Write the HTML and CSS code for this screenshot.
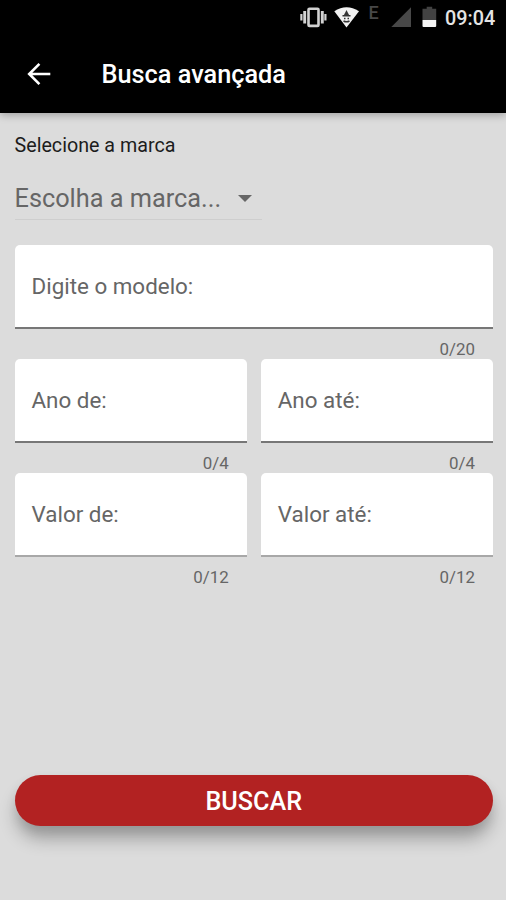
FILE: index.html
```
<!DOCTYPE html>
<html lang="pt-BR">
<head>
<meta charset="utf-8">
<title>Busca avançada</title>
<link rel="stylesheet" href="styles.css">
</head>
<body>
<header class="app-header">
  <div class="status-bar">
    <svg class="status-icons" viewBox="295 0 142 36" width="142" height="36">
      <g fill="none" stroke="#d2d2d2">
        <rect x="308.500" y="8.700" width="10" height="17.200" rx="1" stroke-width="2.600"/>
        <path d="M304.700 11v12.500M322.300 11v12.500" stroke-width="2.900"/>
        <path d="M301.400 14v6.500M325.400 14v6.500" stroke-width="2.200"/>
      </g>
      <path d="M334.300 11.200Q346.500 3.500 359 11.200L346.500 27.500Z" fill="#f2f2f2"/>
      <path d="M346.500 10l2.800 5.500h-5.600Z" fill="#333"/>
      <path d="M342.500 15.700h8M344 18.500h1.500M347.500 18.500h1.500M343.500 21q3 1.500 6 0" fill="none" stroke="#333" stroke-width="1.500"/>
      <text class="network" x="368.500" y="18.800">E</text>
      <path d="M411 7.300V27H391.300Z" fill="#484848"/>
      <path d="M426.700 6.700h5.500v2h4V20h-13.700V8.700h4.200Z" fill="#424242"/>
      <path d="M422.500 20h13.700v6q0 1-1 1h-11.700q-1 0-1-1Z" fill="#f4f4f4"/>
    </svg>
    <span class="clock">09:04</span>
  </div>
  <div class="toolbar">
    <svg class="back" viewBox="0 0 24 24" width="24" height="24" aria-hidden="true"><path d="M12.400 1.800 2.200 12l10.200 10.200M2.500 12H23.300" fill="none" stroke="#fff" stroke-width="2.600"/></svg>
    <h1 class="title">Busca avançada</h1>
  </div>
</header>
<main class="form">
  <div class="brand-label">Selecione a marca</div>
  <div class="select">
    <span>Escolha a marca...</span>
    <svg viewBox="0 0 14 7" width="14" height="7" aria-hidden="true"><path d="M0 0h14L7 7Z" fill="#666"/></svg>
  </div>
  <div class="fields">
    <div class="field wide"><div class="box">Digite o modelo:</div><div class="counter">0/20</div></div>
    <div class="field"><div class="box">Ano de:</div><div class="counter">0/4</div></div>
    <div class="field"><div class="box">Ano até:</div><div class="counter">0/4</div></div>
    <div class="field last"><div class="box">Valor de:</div><div class="counter">0/12</div></div>
    <div class="field last"><div class="box">Valor até:</div><div class="counter">0/12</div></div>
  </div>
  <button class="submit">BUSCAR</button>
</main>
</body>
</html>
```
FILE: styles.css
```
* { box-sizing: border-box; }
body {
  margin: 0;
  height: 900px;
  overflow: hidden;
  background: #dcdcdc;
  font-family: Roboto, "Liberation Sans", sans-serif;
  color: #666;
}
.app-header {
  height: 113px;
  background: #000;
  color: #fff;
  box-shadow: 0 2px 8px rgba(0, 0, 0, .28);
}
.status-bar {
  display: flex;
  justify-content: flex-end;
  height: 36px;
  padding-right: 10px;
}
.status-icons { margin-right: 8px; }
.network {
  font-size: 18px;
  font-weight: 500;
  fill: #484848;
}
.clock {
  width: 51px;
  font-size: 19.800px;
  font-weight: 500;
  line-height: 37px;
  color: #e4e4e4;
  white-space: nowrap;
}
.toolbar {
  display: flex;
  align-items: center;
  height: 76px;
  padding-left: 27px;
}
.title {
  margin: 2px 0 0 50.500px;
  font-size: 25.300px;
  font-weight: 500;
  line-height: 30px;
}
.form {
  display: flex;
  flex-direction: column;
  padding: 21px 13px 0 14.500px;
}
.brand-label {
  font-size: 19.700px;
  line-height: 24px;
  color: #1c1c1c;
}
.select {
  display: flex;
  align-items: center;
  justify-content: space-between;
  width: 247px;
  height: 43px;
  margin: 19px 0 25px;
  padding: 0 10px 0 0;
  border-bottom: 1px solid #cecece;
  font-size: 25.300px;
}
.fields {
  display: grid;
  grid-template-columns: 1fr 1fr;
  column-gap: 14px;
}
.field { height: 114px; }
.wide { grid-column: 1 / -1; }
.box {
  height: 84px;
  padding: 0 17px;
  border-bottom: 2px solid #777;
  border-radius: 5px 5px 0 0;
  background: #fff;
  font-size: 22.400px;
  line-height: 83px;
}
.last .box { border-bottom: 2px solid #a8a8a8; }
.counter {
  padding: 10px 18px 0 0;
  font-size: 16.900px;
  line-height: 20px;
  text-align: right;
}
.submit {
  height: 51px;
  margin-top: 188px;
  padding: 2px 0 0;
  border: 0;
  border-radius: 26px;
  background: #b22222;
  box-shadow: 0 14px 18px -2px rgba(0, 0, 0, .3), 0 4px 12px rgba(0, 0, 0, .06);
  color: #fff;
  font-family: inherit;
  font-size: 25.200px;
  font-weight: 500;
}
```
